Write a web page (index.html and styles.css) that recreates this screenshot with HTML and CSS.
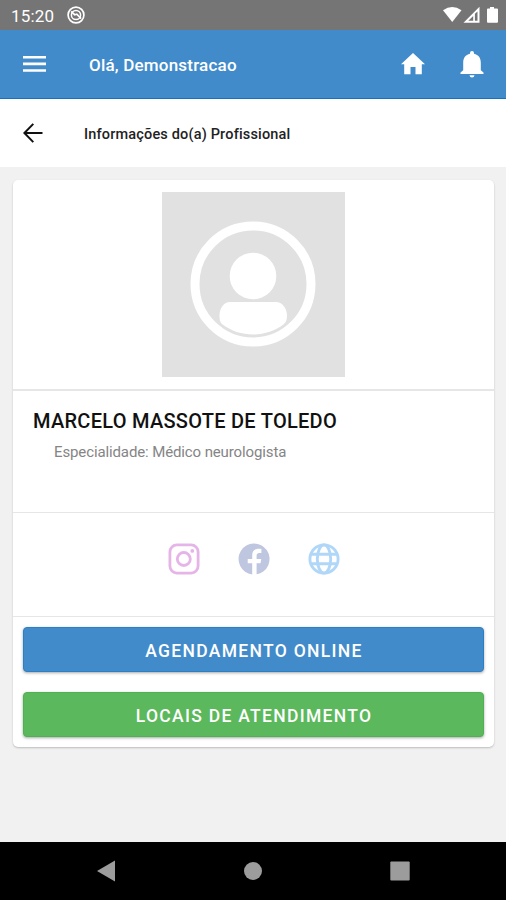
FILE: index.html
```
<!DOCTYPE html>
<html lang="pt-BR">
<head>
	<meta charset="UTF-8">
	<meta name="viewport" content="width=device-width, initial-scale=1.0">
	<title>Informações do(a) Profissional</title>
	<link rel="stylesheet" href="styles.css">
</head>
<body>
	<div class="status-bar">
		<span class="clock">15:20</span>
		<svg class="status-app" width="18" height="18" viewBox="0 0 18 18" fill="none" stroke="#fff">
			<circle cx="9" cy="9" r="7.9" stroke-width="1.7"/>
			<circle cx="9" cy="9" r="4.6" stroke-width="1.5"/>
			<path d="M4.2 5.4l3.4 3.3 2.2-.6 4.3 4.5" stroke-width="1.7"/>
		</svg>
		<svg class="status-icons" width="56" height="18" viewBox="0 0 56 18" fill="#fff">
			<path d="M0 4.3Q9.25-2.3 18.5 4.3L9.25 16z"/>
			<path fill-rule="evenodd" d="M20.5 16.8L36.5.8v16zM25.3 14.8h4.9V9.9zM31.9 7.800v7h2.600V5.400z"/>
			<path d="M47 1h4v1.500h3q1 0 1 1v12.300q0 1-1 1h-9q-1 0-1-1V3.500q0-1 1-1h2z"/>
		</svg>
	</div>
	<header class="header">
		<svg class="menu" width="23" height="16" viewBox="0 0 23 16" fill="#fff">
			<path d="M0 0h23v2.500H0zM0 6.600h23v2.600H0zM0 13.200h23v2.600H0z"/>
		</svg>
		<span class="greeting">Olá, Demonstracao</span>
		<svg class="home" width="24" height="22" viewBox="0 0 24 22" fill="#fff">
			<path d="M12 0L24 11.300h-3.200V21.200h-6.300v-7.200h-5v7.200H3.200V11.300H0z"/>
		</svg>
		<svg class="bell" width="24" height="27" viewBox="0 0 24 27" fill="#fff">
			<path d="M12 0q2 0 2 2v.7c4.500 1 6.800 4.300 6.800 9v7.500L23.500 21.500v1.600H.5v-1.600L3.200 19.200v-7.500c0-4.700 2.300-8 6.800-9V2q0-2 2-2zM9.500 24.200h5q-.3 2.400-2.500 2.400t-2.500-2.400z"/>
		</svg>
	</header>
	<div class="subheader">
		<svg class="back" width="20" height="20" viewBox="0 0 20 20" fill="none" stroke="#111" stroke-width="2">
			<path d="M19.500 10H1.500M10.300.9L1.400 10l8.900 9.100"/>
		</svg>
		<h1 class="page-title">Informações do(a) Profissional</h1>
	</div>
	<main class="content">
		<div class="card">
			<div class="photo">
				<svg width="183" height="185" viewBox="0 0 183 185">
					<rect width="183" height="185" fill="#e1e1e1"/>
					<circle cx="91" cy="92" r="58" fill="none" stroke="#fff" stroke-width="9"/>
					<circle cx="91" cy="84" r="23.300" fill="#fff"/>
					<path fill="#fff" d="M68 110h46c6 0 11 6 11 13.500 0 4-1 7-3 8.500-18 14-44 14-62 0-2-1.500-2.500-4.500-2.500-8.500C57.500 116 62 110 68 110z"/>
				</svg>
			</div>
			<div class="info">
				<h2 class="name">MARCELO MASSOTE DE TOLEDO</h2>
				<p class="specialty">Especialidade: Médico neurologista</p>
			</div>
			<div class="social">
				<svg width="32" height="32" viewBox="0 0 32 32" fill="none" stroke="#e5b5e8" stroke-width="2.800">
					<rect x="1.900" y="1.900" width="28.200" height="28.200" rx="7"/>
					<circle cx="15.800" cy="16" r="6.500"/>
					<circle cx="24.300" cy="7.900" r="1.900" fill="#e5b5e8" stroke="none"/>
				</svg>
				<svg width="32" height="32" viewBox="0 0 32 32">
					<path fill="#bfc6df" d="M14.200 31.400A15.500 15.500 0 1 1 18.600 31.300V20.300h3.900l.8-4.400h-4.700v-3.200c0-1.700.9-2.700 2.700-2.700h2.100V6.100c-5.800-1-9.200 1-9.200 6.200v3.600H9.700v4.400h4.500z"/>
				</svg>
				<svg width="32" height="32" viewBox="0 0 32 32" fill="none" stroke="#b0d7f8" stroke-width="2.900">
					<circle cx="16" cy="16" r="14.100"/>
					<ellipse cx="16" cy="16" rx="6.700" ry="14.100"/>
					<path d="M3 11.200h26M3 20.800h26"/>
				</svg>
			</div>
			<div class="actions">
				<button class="btn btn-blue">AGENDAMENTO ONLINE</button>
				<button class="btn btn-green">LOCAIS DE ATENDIMENTO</button>
			</div>
		</div>
	</main>
	<nav class="nav-bar">
		<svg width="18" height="22" viewBox="0 0 18 22" fill="#9c9c9c"><path d="M0 11L18 .5v21z"/></svg>
		<svg width="18" height="22" viewBox="0 0 18 22" fill="#9c9c9c"><circle cx="9" cy="11" r="9"/></svg>
		<svg width="20" height="22" viewBox="0 0 20 22" fill="#9c9c9c"><rect x=".3" y="1.500" width="19.400" height="19" rx="1"/></svg>
	</nav>
</body>
</html>
```

FILE: styles.css
```
* {
	box-sizing: border-box;
}

body {
	background-color: #f1f1f1;
	font-family: Roboto, "Liberation Sans", sans-serif;
	margin: 0;
	height: 900px;
	display: flex;
	flex-direction: column;
	overflow: hidden;
}

svg {
	display: block;
	flex: none;
}

.status-bar {
	background-color: #757575;
	color: #fff;
	height: 30px;
	flex: none;
	display: flex;
	align-items: center;
	padding: 0 7px 0 11px;
}
.clock {
	width: 56px;
	font-size: 17px;
	letter-spacing: 0.15px;
	padding-top: 2px;
}
.status-icons {
	margin-left: auto;
}

.header {
	background-color: #428bca;
	border-bottom: 1px solid #1473bb;
	color: #fff;
	height: 69px;
	flex: none;
	display: flex;
	align-items: center;
	padding: 0 22px 0 23px;
}
.greeting {
	margin-left: 43px;
	padding-top: 1px;
	font-size: 17px;
	font-weight: 500;
	letter-spacing: 0.2px;
}
.home {
	margin-left: auto;
}
.bell {
	margin-left: 35px;
}

.subheader {
	background-color: #fff;
	height: 68px;
	flex: none;
	display: flex;
	align-items: center;
	padding: 0 23px;
}
.page-title {
	margin: 2px 0 0 41px;
	color: #222;
	font-size: 14.5px;
	font-weight: 500;
	letter-spacing: 0.17px;
}

.content {
	flex: 1;
	padding: 13px 12px 0 13px;
}

.card {
	background-color: #fff;
	border-radius: 5px;
	height: 567px;
	box-shadow: 0 1px 2px rgba(0, 0, 0, 0.22);
}

.photo {
	height: 211px;
	padding: 12px 0 0 149px;
	border-bottom: 2px solid #e6e6e6;
}

.info {
	height: 122px;
	padding: 18px 20px 0;
	border-bottom: 1px solid #e6e6e6;
}
.name {
	margin: 0;
	color: #111;
	font-size: 20px;
	font-weight: 500;
	line-height: 24px;
	letter-spacing: 0.27px;
}
.specialty {
	margin: 9px 0 0 21px;
	color: #858585;
	font-size: 15px;
	line-height: 20px;
	letter-spacing: -0.12px;
}

.social {
	height: 104px;
	display: flex;
	gap: 38px;
	padding: 30px 0 0 155px;
	border-bottom: 1px solid #e6e6e6;
}

.actions {
	display: flex;
	flex-direction: column;
	gap: 20px;
	padding: 10px;
}

.btn {
	height: 45px;
	border: none;
	border-radius: 4px;
	color: #fff;
	font-family: inherit;
	font-size: 17.5px;
	font-weight: 500;
	letter-spacing: 1.3px;
	padding: 2px 0 0 1px;
	box-shadow: 0 1px 3px rgba(0, 0, 0, 0.35);
	cursor: pointer;
}
.btn-blue {
	background-color: #428bca;
	border: 1px solid #2b80c5;
}
.btn-green {
	background-color: #5cb85c;
	border: 1px solid #4fb251;
}

.nav-bar {
	background-color: #000;
	height: 58px;
	flex: none;
	display: flex;
	align-items: center;
	justify-content: space-between;
	padding: 0 96px 0 97px;
}
```
